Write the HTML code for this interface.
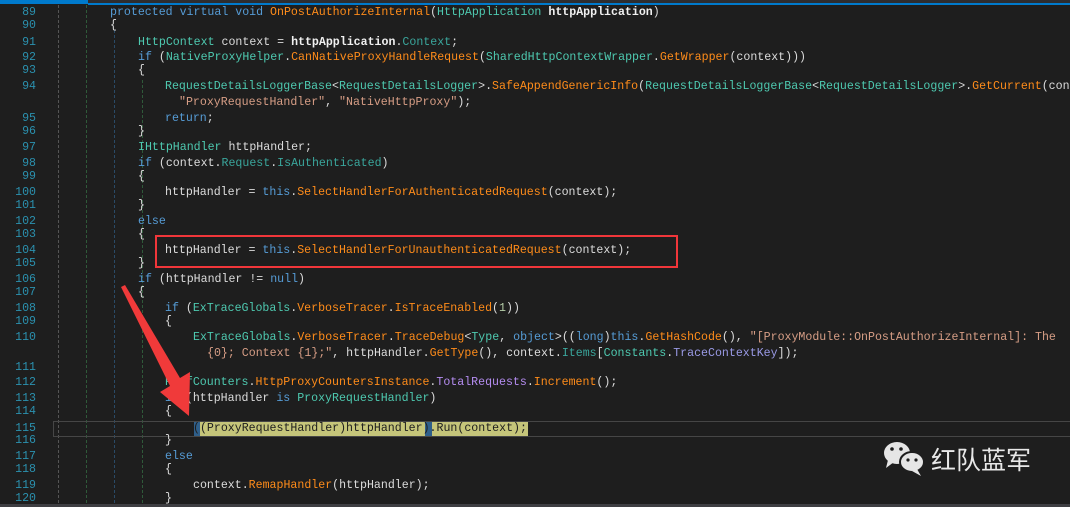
<!DOCTYPE html>
<html><head><meta charset="utf-8"><style>
body{margin:0;width:1070px;height:507px;background:#1e1e1e;overflow:hidden;position:relative;font-family:"Liberation Mono","Noto Sans CJK SC",monospace;font-size:11.6px;color:#dcdcdc}
.l{position:absolute;left:0;height:14px;line-height:14px;white-space:pre}
.n{position:absolute;width:36px;text-align:right;color:#2b91af}
.c{position:absolute;left:110px}
.k{color:#569cd6}.t{color:#4ec9b0}.m{color:#ff8c1a}.p{color:#3aa69c}.s{color:#d69d85}.d{color:#b5cea8}.f{color:#9a9ae6}.q{color:#b48cf0}
b{font-weight:bold;color:#f0f0f0}
.g{position:absolute;top:5px;bottom:4px;width:0;border-left:1px dashed}
</style></head><body>
<div style="position:absolute;left:0;top:0;width:88px;height:4px;background:#007acc"></div>
<div style="position:absolute;left:88px;top:0;right:0;height:3px;background:#2d2d30"></div>
<div style="position:absolute;left:88px;top:3px;right:0;height:2px;background:#007acc"></div>
<div class="g" style="left:58px;border-color:#555"></div>
<div class="g" style="left:86px;border-color:#2f5a3a"></div>
<div class="g" style="left:114px;top:30px;border-color:#2a4a66"></div>
<div class="g" style="left:142px;top:80px;border-color:#2f5a3a"></div>
<div style="position:absolute;left:53px;top:421px;width:1020px;height:14px;border:1px solid #464646;border-right:none"></div>
<div style="position:absolute;left:195px;top:422px;width:333px;height:14px;background:#c5c57a"></div>
<div style="position:absolute;left:194px;top:422px;width:6px;height:14px;background:#2f5f8a"></div>
<div style="position:absolute;left:425px;top:422px;width:7px;height:14px;background:#2f5f8a"></div>

<div class="l" style="top:6px"><span class="n">89</span><span class="c"><span class="k">protected virtual void</span> <span class="m">OnPostAuthorizeInternal</span>(<span class="t">HttpApplication</span> <b>httpApplication</b>)</span></div>
<div class="l" style="top:19px"><span class="n">90</span><span class="c">{</span></div>
<div class="l" style="top:36px"><span class="n">91</span><span class="c" style="left:138px"><span class="t">HttpContext</span> context = <b>httpApplication</b>.<span class="p">Context</span>;</span></div>
<div class="l" style="top:51px"><span class="n">92</span><span class="c" style="left:138px"><span class="k">if</span> (<span class="t">NativeProxyHelper</span>.<span class="m">CanNativeProxyHandleRequest</span>(<span class="t">SharedHttpContextWrapper</span>.<span class="m">GetWrapper</span>(context)))</span></div>
<div class="l" style="top:64px"><span class="n">93</span><span class="c" style="left:138px">{</span></div>
<div class="l" style="top:80px"><span class="n">94</span><span class="c" style="left:165px"><span class="t">RequestDetailsLoggerBase</span>&lt;<span class="t">RequestDetailsLogger</span>&gt;.<span class="m">SafeAppendGenericInfo</span>(<span class="t">RequestDetailsLoggerBase</span>&lt;<span class="t">RequestDetailsLogger</span>&gt;.<span class="m">GetCurrent</span>(context),</span></div>
<div class="l" style="top:96px"><span class="c" style="left:179px"><span class="s">"ProxyRequestHandler"</span>, <span class="s">"NativeHttpProxy"</span>);</span></div>
<div class="l" style="top:112px"><span class="n">95</span><span class="c" style="left:165px"><span class="k">return</span>;</span></div>
<div class="l" style="top:125px"><span class="n">96</span><span class="c" style="left:138px">}</span></div>
<div class="l" style="top:141px"><span class="n">97</span><span class="c" style="left:138px"><span class="t">IHttpHandler</span> httpHandler;</span></div>
<div class="l" style="top:157px"><span class="n">98</span><span class="c" style="left:138px"><span class="k">if</span> (context.<span class="p">Request</span>.<span class="p">IsAuthenticated</span>)</span></div>
<div class="l" style="top:170px"><span class="n">99</span><span class="c" style="left:138px">{</span></div>
<div class="l" style="top:186px"><span class="n">100</span><span class="c" style="left:165px">httpHandler = <span class="k">this</span>.<span class="m">SelectHandlerForAuthenticatedRequest</span>(context);</span></div>
<div class="l" style="top:199px"><span class="n">101</span><span class="c" style="left:138px">}</span></div>
<div class="l" style="top:215px"><span class="n">102</span><span class="c" style="left:138px"><span class="k">else</span></span></div>
<div class="l" style="top:228px"><span class="n">103</span><span class="c" style="left:138px">{</span></div>
<div class="l" style="top:244px"><span class="n">104</span><span class="c" style="left:165px">httpHandler = <span class="k">this</span>.<span class="m">SelectHandlerForUnauthenticatedRequest</span>(context);</span></div>
<div class="l" style="top:257px"><span class="n">105</span><span class="c" style="left:138px">}</span></div>
<div class="l" style="top:273px"><span class="n">106</span><span class="c" style="left:138px"><span class="k">if</span> (httpHandler != <span class="k">null</span>)</span></div>
<div class="l" style="top:286px"><span class="n">107</span><span class="c" style="left:138px">{</span></div>
<div class="l" style="top:302px"><span class="n">108</span><span class="c" style="left:165px"><span class="k">if</span> (<span class="t">ExTraceGlobals</span>.<span class="m">VerboseTracer</span>.<span class="m">IsTraceEnabled</span>(<span class="d">1</span>))</span></div>
<div class="l" style="top:315px"><span class="n">109</span><span class="c" style="left:165px">{</span></div>
<div class="l" style="top:331px"><span class="n">110</span><span class="c" style="left:193px"><span class="t">ExTraceGlobals</span>.<span class="m">VerboseTracer</span>.<span class="m">TraceDebug</span>&lt;<span class="t">Type</span>, <span class="k">object</span>&gt;((<span class="k">long</span>)<span class="k">this</span>.<span class="m">GetHashCode</span>(), <span class="s">"[ProxyModule::OnPostAuthorizeInternal]: The</span></span></div>
<div class="l" style="top:347px"><span class="c" style="left:207px"><span class="s">{0}; Context {1};"</span>, httpHandler.<span class="m">GetType</span>(), context.<span class="p">Items</span>[<span class="t">Constants</span>.<span class="f">TraceContextKey</span>]);</span></div>
<div class="l" style="top:361px"><span class="n">111</span><span class="c" style="left:165px">}</span></div>
<div class="l" style="top:376px"><span class="n">112</span><span class="c" style="left:165px"><span class="t">PerfCounters</span>.<span class="m">HttpProxyCountersInstance</span>.<span class="q">TotalRequests</span>.<span class="m">Increment</span>();</span></div>
<div class="l" style="top:392px"><span class="n">113</span><span class="c" style="left:165px"><span class="k">if</span> (httpHandler <span class="k">is</span> <span class="t">ProxyRequestHandler</span>)</span></div>
<div class="l" style="top:405px"><span class="n">114</span><span class="c" style="left:165px">{</span></div>
<div class="l" style="top:422px"><span class="n">115</span><span class="c" style="left:193px;color:#1e1e1e">((ProxyRequestHandler)httpHandler).Run(context);</span></div>
<div class="l" style="top:434px"><span class="n">116</span><span class="c" style="left:165px">}</span></div>
<div class="l" style="top:450px"><span class="n">117</span><span class="c" style="left:165px"><span class="k">else</span></span></div>
<div class="l" style="top:463px"><span class="n">118</span><span class="c" style="left:165px">{</span></div>
<div class="l" style="top:479px"><span class="n">119</span><span class="c" style="left:193px">context.<span class="m">RemapHandler</span>(httpHandler);</span></div>
<div class="l" style="top:492px"><span class="n">120</span><span class="c" style="left:165px">}</span></div>

<div style="position:absolute;left:155px;top:235px;width:519px;height:29px;border:2px solid #f0363a"></div>
<svg style="position:absolute;left:0;top:0" width="1070" height="507">
<polygon points="121,287 125,285 180,378 190,372 189,416 160,392 170,386" fill="#f03a3a"/>
<g fill="#e6e6e6">
<ellipse cx="897" cy="453" rx="13" ry="11"/><polygon points="888,460 886,468 894,462"/>
</g>
<g fill="#e6e6e6" stroke="#1e1e1e" stroke-width="2">
<ellipse cx="912" cy="462" rx="12" ry="10"/>
</g>
<polygon points="917,469 921,476 912,471" fill="#e6e6e6"/>
<g fill="#1e1e1e"><circle cx="892" cy="449" r="1.8"/><circle cx="901" cy="449" r="1.8"/><circle cx="908" cy="460" r="1.6"/><circle cx="916" cy="460" r="1.6"/></g>
</svg>
<div style="position:absolute;left:931px;top:443px;font-family:'Noto Sans CJK SC',sans-serif;font-size:25px;line-height:32px;color:#e8e8e8;letter-spacing:0px">红队蓝军</div>
<div style="position:absolute;left:0;top:504px;width:1070px;height:3px;background:#3e3e42"></div>
</body></html>
